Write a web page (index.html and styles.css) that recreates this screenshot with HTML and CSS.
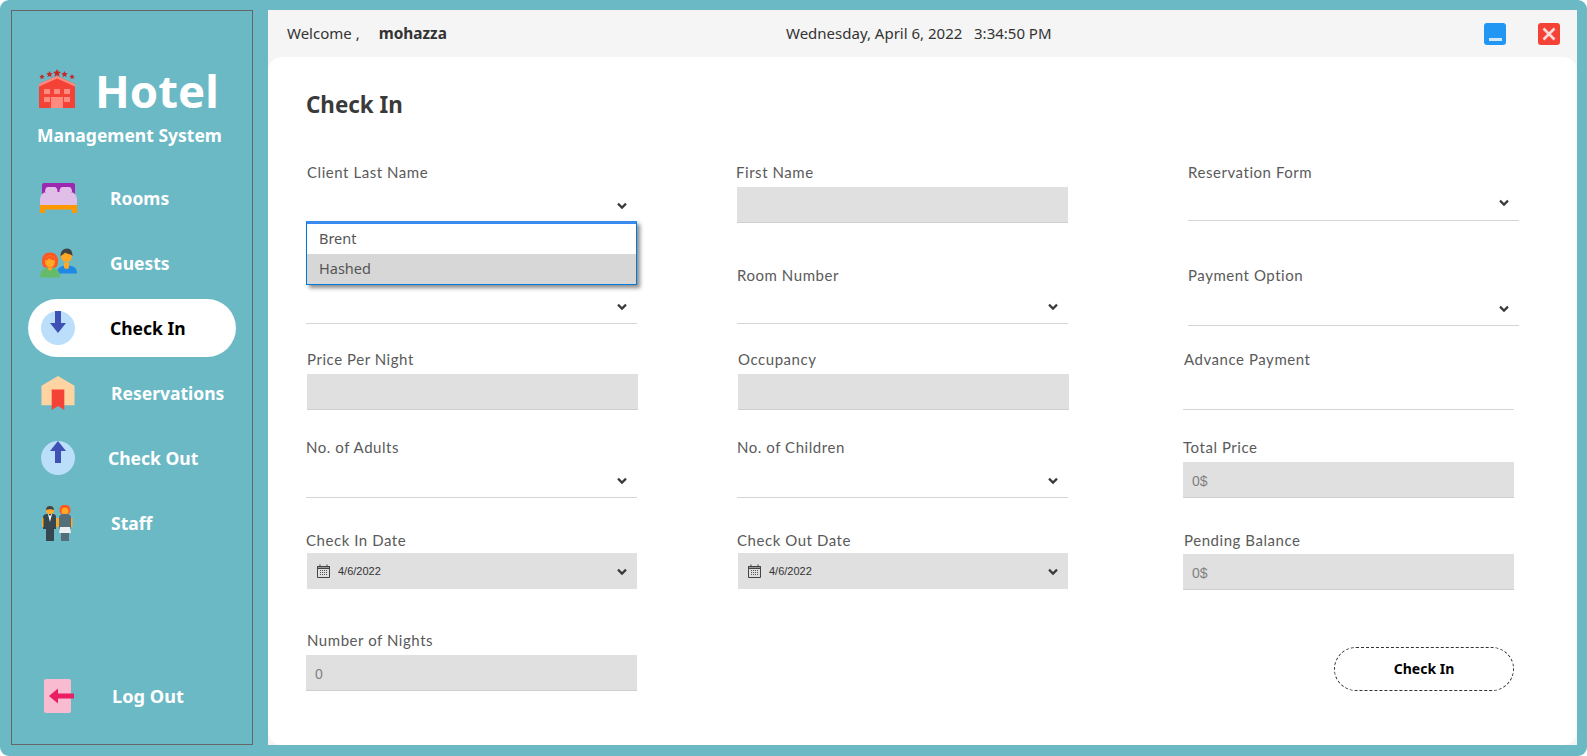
FILE: index.html
```html
<!DOCTYPE html>
<html lang="en">
<head>
  <meta charset="UTF-8" />
  <title>Hotel Management System</title>
  <link rel="stylesheet" href="styles.css">
</head>
<body>
  <svg class="defs" width="0" height="0">
    <defs>
      <symbol id="chev" viewBox="0 0 10 8">
        <path d="M1 1.6 5 5.6 9 1.6" fill="none" stroke="#3a3a3a" stroke-width="2.2"/>
      </symbol>
      <symbol id="cal" viewBox="0 0 13 14">
        <path d="M.5 2.5h12v11H.5z" fill="none" stroke="#444"/>
        <path d="M.5 2.5h12v2H.5z" fill="#999" stroke="#444"/>
        <path d="M3 .5v2M10 .5v2" stroke="#444"/>
        <path d="M3 6.5h7M3 8.5h7M3 10.5h7" stroke="#555" stroke-dasharray="1 1"/>
      </symbol>
    </defs>
  </svg>

  <div class="app">
    <!-- Sidebar -->
    <aside class="sidebar">
      <div class="brand">
        <svg class="brand-icon" viewBox="0 0 36 39">
          <path d="M0 15 18 7l18 8v24H0z" fill="#f44336"/>
          <path d="M0 15 18 7l18 8v2.500L18 9.500 0 17.500z" fill="#ff8a80"/>
          <path d="M12 28h12v11H12z" fill="#ff8a80"/>
          <path d="M5 20h6v5H5zM15 20h6v5h-6zM25 20h6v5h-6zM5 28h6v5H5zM25 28h6v5h-6z" fill="#ff8a80"/>
          <path d="M18 0l1.200 2.600 2.800.300-2.100 1.900.600 2.800L18 6.200l-2.500 1.400.600-2.800L14 2.900l2.800-.300zM10.500 2l1 2 2.200.300-1.600 1.500.400 2.200-2-1-2 1 .400-2.200-1.600-1.500 2.200-.300zM25.500 2l1 2 2.200.300-1.600 1.500.400 2.200-2-1-2 1 .400-2.200-1.600-1.500 2.200-.300zM3 5l.800 1.700 1.900.200-1.400 1.300.400 1.900L3 9.200l-1.700.900.400-1.900L.300 6.900l1.900-.200zM33 5l.800 1.700 1.900.200-1.400 1.300.400 1.900-1.700-.900-1.700.900.400-1.900-1.400-1.300 1.900-.200z" fill="#c62828"/>
        </svg>
        <span class="brand-name">Hotel</span>
      </div>
      <div class="brand-sub">Management System</div>

      <nav class="nav">
        <a class="nav-item">
          <svg class="nav-icon wide" viewBox="0 0 37 30">
            <path d="M2 2a2 2 0 0 1 2-2h29a2 2 0 0 1 2 2v14H2z" fill="#9c27b0"/>
            <path d="M5 9c0-3 1-5 3-5h6c2 0 3.500 1 3.500 5zM19.500 9c0-4 1.500-5 3.500-5h6c2 0 3 2 3 5z" fill="#e1bee7"/>
            <path d="M0 22v-5c0-5 3-8 7-8h23c4 0 7 3 7 8v5z" fill="#e1bee7"/>
            <path d="M0 22h37v8h-5v-3.500H5V30H0z" fill="#ff9800"/>
          </svg>
          <span class="nav-label">Rooms</span>
        </a>
        <a class="nav-item">
          <svg class="nav-icon wide" viewBox="0 0 37 29">
            <path d="M17 25c0-6 4-8 10-8s10 2 10 8z" fill="#1e88e5"/>
            <path d="M24 14h5v4a2.500 2.500 0 0 1-5 0z" fill="#ffa726"/>
            <circle cx="26.500" cy="8" r="5.500" fill="#ffa726"/>
            <path d="M20.500 8c0-5 2.500-8 6.500-8s5.500 3 5.500 7.500c-2-2.500-6.500-2-7.500-3.500-1 1.500-3 2-4.500 4z" fill="#424242"/>
            <path d="M0 29c0-7 4-10 10-10s10 3 10 10z" fill="#66bb6a"/>
            <path d="M8 16h4v4a2 2 0 0 1-4 0z" fill="#ffa726"/>
            <path d="M2 13C2 7 5 4 10 4s8 3 8 9c0 3-1 5-2 6H4c-1-1-2-3-2-6z" fill="#ff5722"/>
            <ellipse cx="10" cy="13" rx="5" ry="6" fill="#ffa726"/>
            <path d="M5 12c.500-3 2-4.500 5-4.500s4.500 1.500 5 4.500c-2.500 0-5-1-6-2.500-.500 1.500-2 2.500-4 2.500z" fill="#ff5722"/>
          </svg>
          <span class="nav-label">Guests</span>
        </a>
        <a class="nav-item active">
          <svg class="nav-icon" viewBox="0 0 34 34">
            <circle cx="17" cy="17" r="17" fill="#bbdefb"/>
            <path d="M14 0h6v12h5l-8 10-8-10h5z" fill="#3f51b5"/>
          </svg>
          <span class="nav-label">Check In</span>
        </a>
        <a class="nav-item">
          <svg class="nav-icon" viewBox="0 0 34 35">
            <path d="M0 10 17 0l17 10v20H0z" fill="#ffd4a3"/>
            <path d="M10.500 14h13v21l-6.500-4-6.500 4z" fill="#f44336"/>
          </svg>
          <span class="nav-label label-res">Reservations</span>
        </a>
        <a class="nav-item">
          <svg class="nav-icon" viewBox="0 0 34 34">
            <circle cx="17" cy="17" r="17" fill="#bbdefb"/>
            <path d="M14 22h6V10h5L17 0 9 10h5z" fill="#3f51b5"/>
          </svg>
          <span class="nav-label label-out">Check Out</span>
        </a>
        <a class="nav-item">
          <svg class="nav-icon tall" viewBox="0 0 34 36">
            <circle cx="9" cy="5" r="4" fill="#ffa726"/>
            <path d="M5 5a4 4 0 0 1 8 0c-2-1-6-1-8 0z" fill="#37474f"/>
            <path d="M2 12c0-2 2-3 4-3h6c2 0 3 1 3 3v12h-2v12H5V24H2z" fill="#37474f"/>
            <path d="M7 9h4l-2 8z" fill="#fff"/>
            <path d="M7.500 9h3L9 11z" fill="#263238"/>
            <path d="M1 13h1.500v9H1zM15 13h1.500v9H15z" fill="#ffa726"/>
            <circle cx="24" cy="5" r="5.500" fill="#ff5722"/>
            <circle cx="24" cy="6" r="3.500" fill="#ffa726"/>
            <path d="M18 13c0-3 2-4 6-4s6 1 6 4v11H18z" fill="#546e7a"/>
            <path d="M19 22h10l1 6H18z" fill="#eceff1"/>
            <path d="M20 28h8v8h-8z" fill="#546e7a"/>
            <path d="M16.500 13H18v9h-1.500zM30 13h1.500v9H30z" fill="#ffa726"/>
          </svg>
          <span class="nav-label">Staff</span>
        </a>
      </nav>

      <a class="nav-item logout">
        <svg class="logout-icon" viewBox="0 0 30 34">
          <rect width="27" height="34" rx="2" fill="#f8bbd0"/>
          <path d="M30 14.500H14V9.500L5 17l9 7.500V19.500h16z" fill="#e91e63"/>
        </svg>
        <span class="nav-label">Log Out</span>
      </a>
    </aside>

    <!-- Main -->
    <main class="main">
      <header class="topbar">
        <div class="welcome">Welcome ,<b>mohazza</b></div>
        <div class="clock">Wednesday, April 6, 2022 &nbsp; 3:34:50 PM</div>
        <div class="win-btns">
          <span class="win-btn btn-min"><i></i></span>
          <span class="win-btn btn-close">
            <svg viewBox="0 0 22 22"><path d="M5.500 5.500l11 11M16.500 5.500l-11 11" stroke="#ffdcd9" stroke-width="2.600"/></svg>
          </span>
        </div>
      </header>

      <section class="content">
        <h1 class="title">Check In</h1>

        <form class="form">
          <!-- row 1 -->
          <div class="field">
            <label>Client Last Name</label>
            <div class="control select"><svg class="chev"><use href="#chev"/></svg></div>
            <ul class="dropdown">
              <li>Brent</li>
              <li class="hover">Hashed</li>
            </ul>
          </div>
          <div class="field">
            <label class="label-left">First Name</label>
            <div class="control filled"></div>
          </div>
          <div class="field col3-in raised">
            <label class="label-flush">Reservation Form</label>
            <div class="control select short"><svg class="chev"><use href="#chev"/></svg></div>
          </div>

          <!-- row 2 -->
          <div class="field">
            <div class="control select"><svg class="chev"><use href="#chev"/></svg></div>
          </div>
          <div class="field">
            <label class="tight label-flush">Room Number</label>
            <div class="control select"><svg class="chev"><use href="#chev"/></svg></div>
          </div>
          <div class="field col3-in lower">
            <label class="label-flush">Payment Option</label>
            <div class="control select"><svg class="chev"><use href="#chev"/></svg></div>
          </div>

          <!-- row 3 -->
          <div class="field nudged">
            <label class="label-flush">Price Per Night</label>
            <div class="control filled"></div>
          </div>
          <div class="field nudged">
            <label class="label-flush">Occupancy</label>
            <div class="control filled"></div>
          </div>
          <div class="field">
            <label>Advance Payment</label>
            <div class="control select"></div>
          </div>

          <!-- row 4 -->
          <div class="field">
            <label class="label-flush">No. of Adults</label>
            <div class="control select"><svg class="chev"><use href="#chev"/></svg></div>
          </div>
          <div class="field">
            <label class="label-flush">No. of Children</label>
            <div class="control select"><svg class="chev"><use href="#chev"/></svg></div>
          </div>
          <div class="field">
            <label class="label-flush">Total Price</label>
            <div class="control filled">0$</div>
          </div>

          <!-- row 5 -->
          <div class="field">
            <label class="tight label-flush">Check In Date</label>
            <div class="control date nudged">
              <svg class="cal"><use href="#cal"/></svg>
              <span>4/6/2022</span>
              <svg class="chev"><use href="#chev"/></svg>
            </div>
          </div>
          <div class="field">
            <label class="tight label-flush">Check Out Date</label>
            <div class="control date nudged">
              <svg class="cal"><use href="#cal"/></svg>
              <span>4/6/2022</span>
              <svg class="chev"><use href="#chev"/></svg>
            </div>
          </div>
          <div class="field pending">
            <label>Pending Balance</label>
            <div class="control filled">0$</div>
          </div>

          <!-- row 6 -->
          <div class="field">
            <label>Number of Nights</label>
            <div class="control filled">0</div>
          </div>
          <div></div>
          <div class="field">
            <button class="submit" type="button">Check In</button>
          </div>
        </form>
      </section>
    </main>
  </div>
</body>
</html>
```

FILE: styles.css
```css
* {
  box-sizing: border-box;
}

html, body {
  margin: 0;
  height: 100%;
  background: #fff;
  overflow: hidden;
}

.defs {
  display: none;
}

.app {
  width: 1587px;
  height: 756px;
  display: flex;
  gap: 15px;
  padding: 10px 10px 11px 11px;
  background: #6bb9c5;
  border-radius: 9px;
  font-family: "Noto Sans", sans-serif;
}

/* Sidebar */
.sidebar {
  width: 242px;
  display: flex;
  flex-direction: column;
  border: 1px solid #666;
  color: #fff;
  padding: 57px 16px 19px 16px;
}

.brand {
  display: flex;
  align-items: flex-start;
  gap: 20px;
  padding-left: 11px;
  height: 42px;
}

.brand-icon {
  width: 36px;
  height: 39px;
  margin-top: 1px;
}

.brand-name {
  font-size: 45.500px;
  font-weight: 700;
  line-height: 44px;
  height: 42px;
}

.brand-sub {
  font-size: 17.500px;
  font-weight: 700;
  line-height: 24px;
  margin: 13px 0 0 9px;
  white-space: nowrap;
}

.nav {
  display: flex;
  flex-direction: column;
  gap: 7px;
  margin-top: 22px;
}

.nav-item {
  height: 58px;
  display: flex;
  align-items: center;
  padding-left: 13px;
  border-radius: 29px;
  font-size: 17.500px;
  font-weight: 700;
}

.nav-item.active {
  background: #fff;
  color: #000;
}

.nav-icon {
  width: 34px;
  height: 34px;
  flex: none;
}

.nav-icon.wide {
  width: 37px;
  height: 30px;
  margin-left: -1px;
}

.nav-icon.tall {
  height: 36px;
}

.nav-label {
  margin-left: 35px;
  white-space: nowrap;
}

.nav-icon.wide + .nav-label {
  margin-left: 33px;
}

.nav-icon.tall + .nav-label {
  margin-left: 36px;
}

.nav-label.label-res {
  margin-left: 36px;
}

.nav-label.label-out {
  margin-left: 33px;
}

.logout {
  margin-top: auto;
  padding-left: 16px;
  font-size: 18.200px;
}

.logout-icon {
  width: 30px;
  height: 34px;
  flex: none;
}

.logout .nav-label {
  margin-left: 38px;
}

/* Main */
.main {
  flex: 1;
  display: flex;
  flex-direction: column;
  background: #f5f5f5;
}

.topbar {
  height: 47px;
  display: flex;
  align-items: center;
  padding: 0 17px 2px 19px;
  font-size: 15px;
  color: #333;
}

.welcome {
  width: 499px;
  margin-top: 2px;
}

.welcome b {
  margin-left: 19px;
  font-size: 15.400px;
}

.win-btns {
  display: flex;
  gap: 32px;
  margin-left: auto;
  margin-bottom: -2px;
}

.win-btn {
  width: 22px;
  height: 22px;
  border-radius: 3px;
  display: flex;
}

.btn-min {
  background: #2196f3;
}

.btn-min i {
  width: 13px;
  height: 3px;
  background: #cfe8fc;
  margin: 15px auto 0;
}

.btn-close {
  background: #f44336;
}

.content {
  flex: 1;
  background: #fff;
  border-radius: 14px;
  padding: 31px 0 0 38px;
  color: #555;
}

.title {
  margin: 0;
  font-size: 22.400px;
  font-weight: 700;
  line-height: 34px;
  color: #3a3a3a;
}

/* Form */
.form {
  display: grid;
  grid-template-columns: 431px 446px 336px;
  grid-template-rows: 101px 101px 86px 88px 91px 102px;
}

.field {
  position: relative;
  width: 331px;
  align-self: end;
}

.col3-in {
  margin-left: 5px;
}

.lower {
  transform: translateY(2px);
}

.raised {
  margin-bottom: 2px;
}

.nudged {
  margin-left: 1px;
}

.pending {
  transform: translateY(1px);
}

.field label {
  display: block;
  font-family: "Lato", sans-serif;
  font-size: 15px;
  line-height: 18px;
  letter-spacing: .55px;
  color: #5a5a5a;
  margin: 0 0 6px 1px;
}

.field label.tight {
  margin-bottom: 4px;
}

.pending label {
  margin-bottom: 5px;
}

.field label.label-left {
  margin-left: -1px;
}

.field label.label-flush {
  margin-left: 0;
}

.control {
  height: 36px;
  display: flex;
  align-items: center;
  padding: 0 8px;
  font-family: "Liberation Sans", sans-serif;
  font-size: 14px;
  color: #808080;
}

.control.short {
  height: 34px;
}

.select {
  justify-content: flex-end;
  border-bottom: 1px solid #d5d5d5;
}

.filled {
  background: #e0e0e0;
  border-bottom: 1px solid #cfcfcf;
  padding: 2px 8px 0 9px;
}

.date {
  background: #e0e0e0;
  padding-left: 10px;
  font-size: 11px;
  color: #333;
}

.date span {
  margin-left: 8px;
}

.date .chev {
  margin-left: auto;
}

.chev {
  width: 10px;
  height: 8px;
  margin: 2px 2px 0 0;
}

.short .chev {
  margin-top: -2px;
}

.cal {
  width: 13px;
  height: 14px;
}

.dropdown {
  position: absolute;
  left: 0;
  right: 0;
  top: 100%;
  margin: -2px 0 0;
  padding: 0;
  list-style: none;
  background: #fff;
  border: 1px solid #0078d7;
  border-top: 3px solid #3a8bf0;
  box-shadow: 3px 3px 4px rgba(0, 0, 0, .45);
  font-size: 14.500px;
  color: #555;
  z-index: 2;
}

.dropdown li {
  height: 30px;
  line-height: 28px;
  padding-left: 12px;
}

.dropdown .hover {
  background: #d7d7d7;
}

.submit {
  display: block;
  width: 180px;
  height: 44px;
  margin-left: 151px;
  padding-bottom: 3px;
  background: #fff;
  border: 1px dashed #333;
  border-radius: 22px;
  font-family: "Noto Sans", sans-serif;
  font-size: 14px;
  font-weight: 700;
  color: #000;
}
```
